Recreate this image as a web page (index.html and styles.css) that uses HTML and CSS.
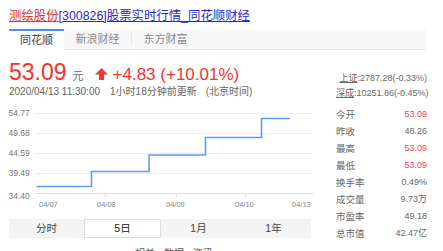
FILE: index.html
```html
<!DOCTYPE html>
<html>
    <head>
        <meta charset="utf-8">
        <title>测绘股份</title>
        <link rel="stylesheet" href="styles.css">
    </head>
    <body>
        <div class="page">
            <div class="title"><a class="name" href="#">测绘股份</a><a class="link" href="#">[300826]股票实时行情_同花顺财经</a></div>

            <div class="tabs">
                <div class="tab active">同花顺</div>
                <div class="tab">新浪财经</div>
                <div class="tab">东方财富</div>
            </div>

            <div class="main">
                <div class="left">
                    <div class="price">
                        <span class="now">53.09</span>
                        <span class="unit">元</span>
                        <svg class="arrow" width="13" height="12" viewBox="0 0 13 12">
                            <polygon points="0,6.5 6.5,0 13,6.5" fill="#f33"/>
                            <rect x="4" y="6" width="5" height="6" fill="#f33"/>
                        </svg>
                        <span class="change">+4.83 (+10.01%)</span>
                    </div>
                    <div class="time">2020/04/13 11:30:00<span class="ago">1小时18分钟前更新</span><span class="zone">(北京时间)</span></div>

                    <svg class="chart" width="313" height="113" viewBox="0 0 313 113">
                        <g stroke="#eeeeee" stroke-width="1">
                            <line x1="36" y1="14.5" x2="313" y2="14.5"/>
                            <line x1="36" y1="34.5" x2="313" y2="34.5"/>
                            <line x1="36" y1="54.5" x2="313" y2="54.5"/>
                            <line x1="36" y1="74.5" x2="313" y2="74.5"/>
                        </g>
                        <g stroke="#dddddd" stroke-width="1">
                            <line x1="36" y1="94.5" x2="313" y2="94.5"/>
                            <line x1="105.5" y1="94.5" x2="105.5" y2="98"/>
                            <line x1="176.5" y1="94.5" x2="176.5" y2="98"/>
                            <line x1="245.5" y1="94.5" x2="245.5" y2="98"/>
                        </g>
                        <g class="ylab">
                            <text x="8.5" y="17">54.77</text>
                            <text x="8.5" y="37">49.68</text>
                            <text x="8.5" y="57">44.59</text>
                            <text x="8.5" y="77">39.49</text>
                            <text x="8.5" y="100">34.40</text>
                        </g>
                        <g class="xlab">
                            <text x="39" y="107.5">04/07</text>
                            <text x="97" y="107.5">04/08</text>
                            <text x="166" y="107.5">04/09</text>
                            <text x="235" y="107.5">04/10</text>
                            <text x="292" y="107.5">04/13</text>
                        </g>
                        <polyline fill="none" stroke="#5c9cf5" stroke-width="1.6"
                            points="36.5,87.5 91.5,87.5 91.5,72.5 149,72.5 149,56 205.5,56 205.5,38.5 261.5,38.5 261.5,19.5 290,19.5"/>
                    </svg>

                    <div class="periods">
                        <div class="period">分时</div>
                        <div class="period active">5日</div>
                        <div class="period">1月</div>
                        <div class="period">1年</div>
                    </div>
                    <div class="more">相关 · 数据 · 资讯</div>
                </div>

                <div class="side">
                    <div class="index"><u>上证</u>:2787.28(-0.33%)</div>
                    <div class="index"><u>深成</u>:10251.86(-0.45%)</div>
                    <div class="stats">
                        <div class="row"><span>今开</span><span class="up">53.09</span></div>
                        <div class="row"><span>昨收</span><span>48.26</span></div>
                        <div class="row"><span>最高</span><span class="up">53.09</span></div>
                        <div class="row"><span>最低</span><span class="up">53.09</span></div>
                        <div class="row"><span>换手率</span><span>0.49%</span></div>
                        <div class="row"><span>成交量</span><span>9.73万</span></div>
                        <div class="row"><span>市盈率</span><span>49.18</span></div>
                        <div class="row"><span>总市值</span><span>42.47亿</span></div>
                    </div>
                </div>
            </div>
        </div>
    </body>
</html>
```

FILE: styles.css
```css
body{
    margin: 0;
    background: #ffffff;
    font-family: "Liberation Sans", "Noto Sans CJK SC", sans-serif;
    color: #333333;
    overflow: hidden;
}
.page{
    width: 443px;
    height: 251px;
    padding-left: 9px;
    box-sizing: border-box;
    overflow: hidden;
}
.title{
    height: 29px;
    padding-top: 8px;
    box-sizing: border-box;
    font-size: 12.4px;
    line-height: 16px;
    white-space: nowrap;
}
.title a{
    text-decoration: underline;
}
.name{
    color: #e62e2e;
}
.link{
    color: #2a2ad0;
}
.tabs{
    display: flex;
    width: 417px;
    height: 21px;
    background: #f8f8f8;
    border-bottom: 1px solid #e8e8e8;
    box-sizing: border-box;
}
.tab{
    width: 67px;
    font-size: 11px;
    line-height: 20px;
    text-align: center;
    color: #888888;
}
.tab + .tab + .tab{
    border-left: 1px solid #e6e6e6;
    height: 14px;
    margin-top: 3px;
    line-height: 14px;
}
.tab.active{
    width: 55px;
    background: #ffffff;
    color: #444444;
    border-top: 2px solid #4a90e2;
    line-height: 18px;
    height: 21px;
    box-sizing: border-box;
}
.main{
    display: flex;
}
.left{
    width: 304px;
}
.price{
    display: flex;
    align-items: baseline;
    margin-top: 9px;
    line-height: 26px;
    height: 26px;
    color: #f33333;
    white-space: nowrap;
}
.now{
    font-size: 23px;
}
.unit{
    font-size: 11px;
    color: #666666;
    margin-left: 6px;
}
.arrow{
    margin-left: 11px;
    align-self: center;
    margin-top: 3px;
}
.change{
    font-size: 17px;
    margin-left: 5px;
}
.time{
    font-size: 10px;
    line-height: 14px;
    color: #666666;
    white-space: nowrap;
}
.ago{
    margin-left: 10px;
}
.zone{
    margin-left: 9px;
}
.chart{
    display: block;
    margin-left: -9px;
}
.ylab{
    font-size: 8.5px;
    fill: #777777;
}
.xlab{
    font-size: 7.5px;
    fill: #888888;
}
.periods{
    display: flex;
    width: 302px;
    height: 19px;
    margin-top: 7px;
    background: #f4f4f4;
}
.period{
    flex: 1;
    font-size: 10.5px;
    line-height: 19px;
    text-align: center;
    color: #444444;
}
.period.active{
    background: #ffffff;
    border: 1px solid #dddddd;
    line-height: 17px;
    color: #222222;
}
.more{
    margin-top: 9px;
    padding-left: 126px;
    font-size: 10px;
    line-height: 14px;
    color: #555555;
}
.side{
    width: 91px;
    margin-left: 23px;
    padding-top: 21px;
}
.index{
    font-size: 9px;
    line-height: 15px;
    color: #666666;
    text-align: right;
    white-space: nowrap;
}
.stats{
    margin-top: 5px;
}
.row{
    display: flex;
    justify-content: space-between;
    font-size: 9px;
    line-height: 17px;
    color: #666666;
}
.row span:first-child{
    font-size: 9.5px;
}
.up{
    color: #f3434f;
}
```
